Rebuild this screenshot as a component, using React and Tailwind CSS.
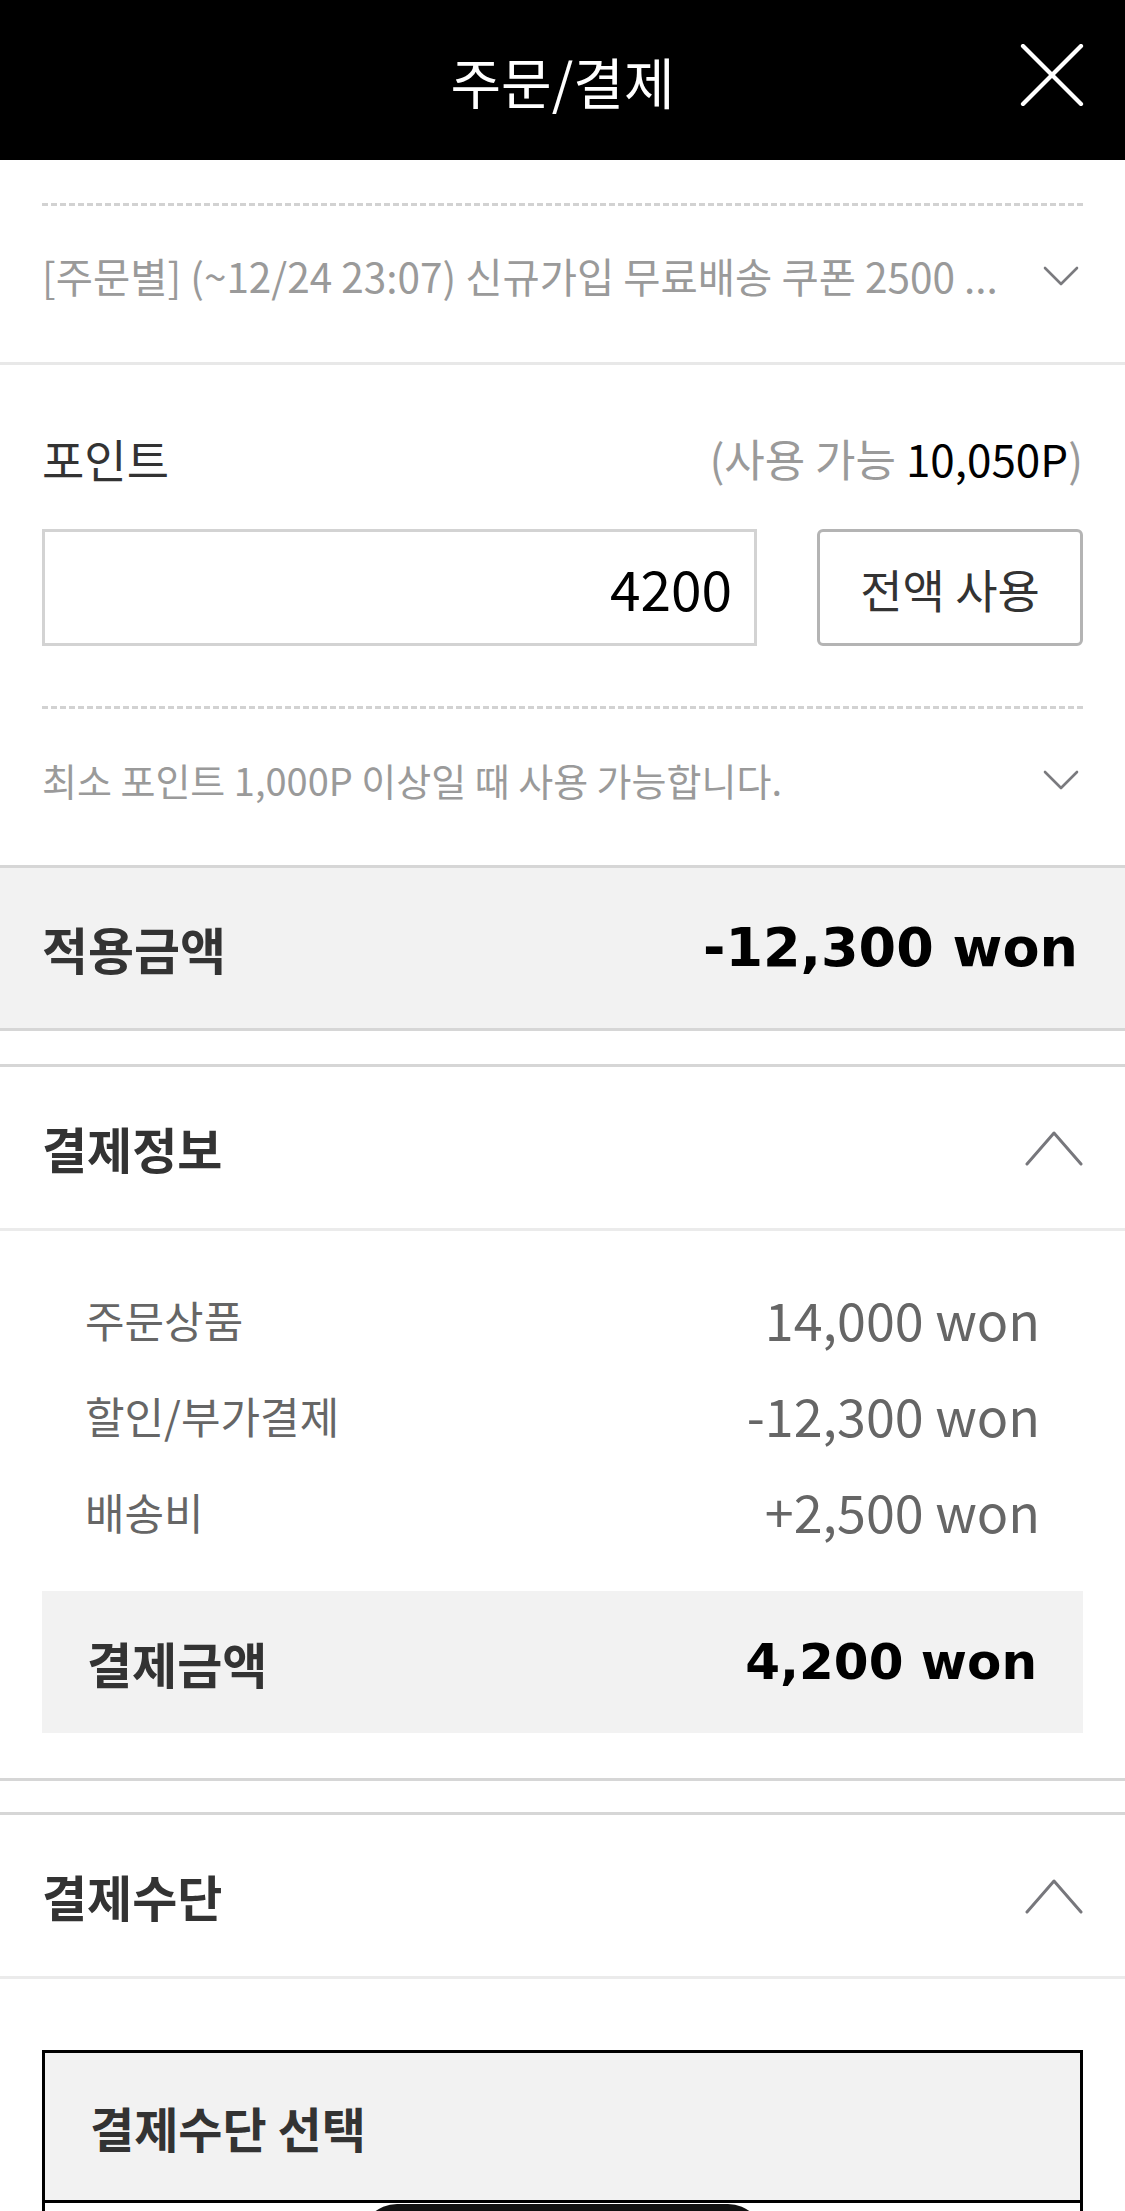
import React from "react";

function ChevronDown() {
  return (
    <svg width="36" height="20" viewBox="0 0 36 20" fill="none">
      <polyline points="2,2 18,18 34,2" stroke="#7a7a7e" strokeWidth="2.6" strokeLinecap="round" strokeLinejoin="round" />
    </svg>
  );
}

function ChevronUp() {
  return (
    <svg width="58" height="36" viewBox="0 0 58 36" fill="none">
      <polyline points="2,34 29,3 56,34" stroke="#77777c" strokeWidth="3" strokeLinecap="round" strokeLinejoin="round" />
    </svg>
  );
}

function CloseIcon() {
  return (
    <svg width="64" height="62" viewBox="0 0 64 62" fill="none">
      <line x1="3" y1="2" x2="61" y2="60" stroke="#ffffff" strokeWidth="4.2" strokeLinecap="round" />
      <line x1="61" y1="2" x2="3" y2="60" stroke="#ffffff" strokeWidth="4.2" strokeLinecap="round" />
    </svg>
  );
}

function Row({ label, value }) {
  return (
    <div className="h-[96px] flex items-center justify-between">
      <span className="text-[43px] leading-none text-[#666666]">{label}</span>
      <span className="text-[52px] leading-none text-[#666666]">{value}</span>
    </div>
  );
}

export default function App() {
  return (
    <div className="w-[1125px] h-[2211px] overflow-hidden bg-white font-['Noto_Sans_CJK_KR','Noto_Sans_KR',sans-serif]">
      {/* Header */}
      <header className="relative h-[160px] bg-black flex items-center justify-center">
        <h1 className="text-white text-[55px] font-normal leading-none">주문/결제</h1>
        <button className="absolute right-[41px] top-[44px] w-[64px] h-[62px] flex items-center justify-center">
          <CloseIcon />
        </button>
      </header>

      {/* Coupon */}
      <section className="px-[42px]">
        <div className="h-[46px] border-b-[3px] border-dashed border-[#d2d2d2]" />
        <div className="h-[156px] flex items-center justify-between pb-[16px]">
          <span className="text-[40.5px] leading-none text-[#9a9a9a] whitespace-nowrap">
            [주문별] (~12/24 23:07) 신규가입 무료배송 쿠폰 2500 ...
          </span>
          <span className="mr-[4px] flex items-center">
            <ChevronDown />
          </span>
        </div>
      </section>
      <div className="h-[3px] bg-[#e8e8e8]" />

      {/* Points */}
      <section className="px-[42px] pt-[63px]">
        <div className="h-[60px] flex items-center justify-between">
          <span className="text-[46px] leading-none text-[#333333]">포인트</span>
          <span className="text-[44px] leading-none text-[#9a9a9a] whitespace-nowrap">
            (사용 가능 <span className="text-black">10,050P</span>)
          </span>
        </div>
        <div className="mt-[41px] flex justify-between">
          <div className="w-[715px] h-[117px] border-[3px] border-[#d3d3d3] flex items-center justify-end pr-[22px]">
            <span className="text-[55px] leading-none text-black">4200</span>
          </div>
          <button className="w-[266px] h-[117px] border-[3px] border-[#b4b4b4] rounded-[6px] bg-white flex items-center justify-center">
            <span className="text-[46px] leading-none text-[#333333]">전액 사용</span>
          </button>
        </div>
        <div className="mt-[60px] h-[3px] border-t-[3px] border-dashed border-[#d2d2d2]" />
        <div className="h-[156px] flex items-center justify-between pb-[14px]">
          <span className="text-[38px] leading-none text-[#9a9a9a] whitespace-nowrap">
            최소 포인트 1,000P 이상일 때 사용 가능합니다.
          </span>
          <span className="mr-[4px] flex items-center">
            <ChevronDown />
          </span>
        </div>
      </section>

      {/* Applied amount */}
      <div className="h-[166px] border-y-[3px] border-[#d6d6d6] bg-[#f2f2f2] flex items-center justify-between pl-[42px] pr-[47px]">
        <span className="text-[50px] font-bold leading-none text-[#333333]">적용금액</span>
        <span className="font-['DejaVu_Sans',sans-serif] text-[54px] font-bold leading-none text-black">-12,300 won</span>
      </div>

      {/* Payment info */}
      <div className="mt-[33px] border-t-[3px] border-[#d6d6d6]">
        <div className="h-[164px] flex items-center justify-between px-[42px] border-b-[3px] border-[#ebebeb]">
          <span className="text-[49px] font-bold leading-none text-[#333333]">결제정보</span>
          <ChevronUp />
        </div>
        <div className="pt-[40px] px-[85px]">
          <Row label="주문상품" value="14,000 won" />
          <Row label="할인/부가결제" value="-12,300 won" />
          <Row label="배송비" value="+2,500 won" />
        </div>
        <div className="mx-[42px] mt-[32px] h-[142px] bg-[#f2f2f2] flex items-center justify-between pl-[45px] pr-[46px]">
          <span className="text-[49px] font-bold leading-none text-[#333333]">결제금액</span>
          <span className="font-['DejaVu_Sans',sans-serif] text-[50px] font-bold leading-none text-black">4,200 won</span>
        </div>
        <div className="h-[48px] border-b-[3px] border-[#d6d6d6]" />
      </div>

      {/* Payment method */}
      <div className="mt-[31px] border-t-[3px] border-[#d6d6d6]">
        <div className="h-[164px] flex items-center justify-between px-[42px] border-b-[3px] border-[#ebebeb]">
          <span className="text-[49px] font-bold leading-none text-[#333333]">결제수단</span>
          <ChevronUp />
        </div>
        <div className="mx-[42px] mt-[71px] border-[3px] border-black">
          <div className="h-[150px] bg-[#f2f2f2] flex items-center pl-[45px] border-b-[3px] border-black">
            <span className="text-[48px] font-bold leading-none text-[#333333]">결제수단 선택</span>
          </div>
          <div className="pt-[1px] h-[120px] bg-white">
            <div className="mx-auto w-[403px] h-[60px] bg-[#111111] rounded-t-[36px]" />
          </div>
        </div>
      </div>
    </div>
  );
}
